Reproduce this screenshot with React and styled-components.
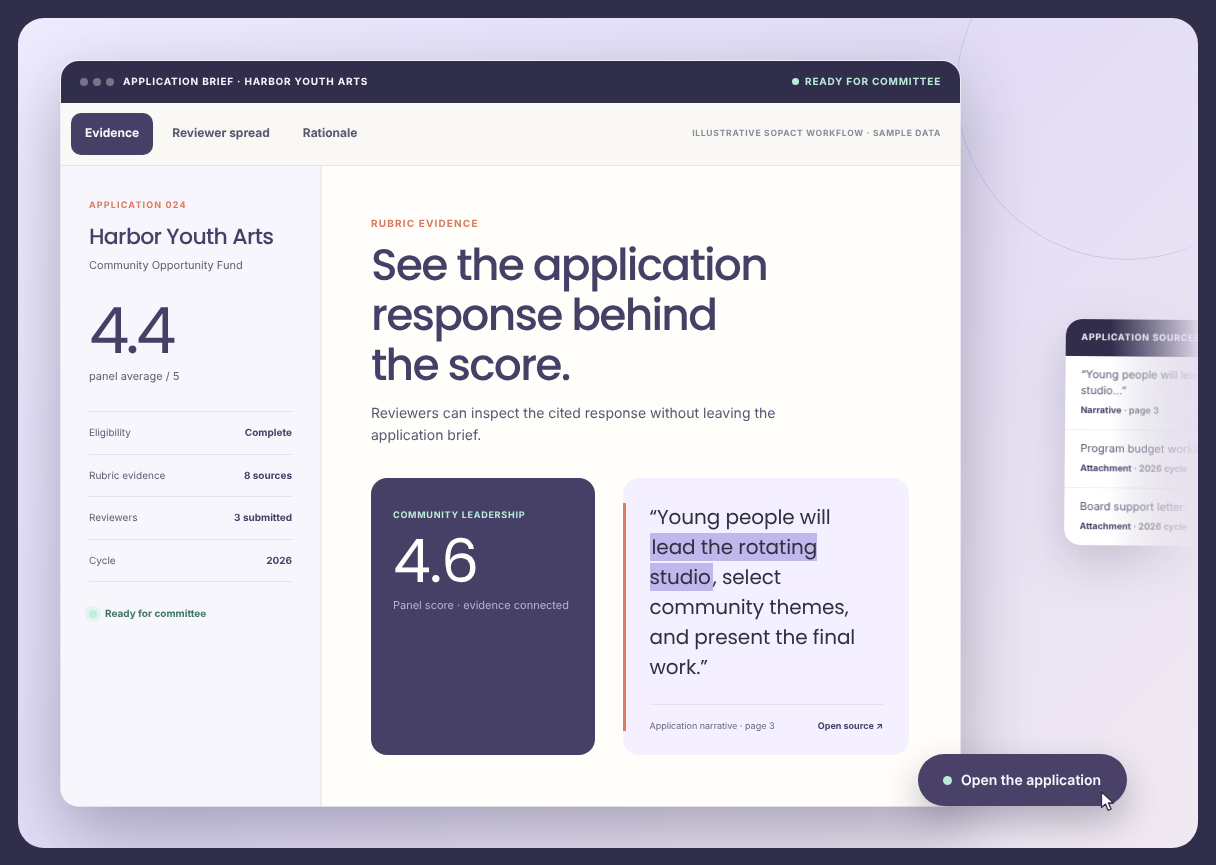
import React from "react";
import styled, { createGlobalStyle } from "styled-components";

const display = `"Poppins", "Inter", sans-serif`;

const Global = createGlobalStyle`
  html, body { margin: 0; padding: 0; background: #312e4c; }
  body {
    font-family: "Inter", "Liberation Sans", sans-serif;
    -webkit-font-smoothing: antialiased;
    text-rendering: geometricPrecision;
  }
  * { box-sizing: border-box; }
`;

const Page = styled.div`
  width: 1216px;
  height: 865px;
  padding: 18px 18px 17px;
  background: #312e4c;
`;

const Stage = styled.div`
  position: relative;
  height: 830px;
  padding: 43px 238px 42px 43px;
  border-radius: 26px;
  overflow: hidden;
  will-change: transform;
  background: linear-gradient(135deg, #efebff 0%, #e2dcf6 48%, #f1e9f1 100%);
`;

const Ring = styled.div`
  position: absolute;
  left: 938px;
  top: -100px;
  width: 342px;
  height: 342px;
  border-radius: 50%;
  border: 1px solid #c9c2ee;
  -webkit-mask-image: linear-gradient(90deg, #000 60%, transparent 75%);
  mask-image: linear-gradient(90deg, #000 60%, transparent 75%);
`;

const Window = styled.div`
  position: relative;
  height: 745px;
  border-radius: 18px;
  overflow: hidden;
  background: #fffefb;
  box-shadow: 0 0 0 1px rgba(255, 255, 255, 0.6), 0 26px 70px rgba(49, 46, 76, 0.36);
  display: flex;
  flex-direction: column;
`;

const TitleBar = styled.div`
  height: 42px;
  padding: 0 19px 1px;
  background: #312e4c;
  display: flex;
  align-items: center;
  justify-content: space-between;
`;

const TitleLeft = styled.div`
  display: flex;
  align-items: center;
  gap: 5px;
`;

const Light = styled.span`
  width: 8px;
  height: 8px;
  border-radius: 50%;
  background: #77748a;
`;

const WindowTitle = styled.span`
  margin-left: 4px;
  color: #f6f4fb;
  font-size: 10px;
  font-weight: 700;
  letter-spacing: 0.78px;
`;

const ReadyTag = styled.span`
  display: flex;
  align-items: center;
  gap: 6px;
  color: #b9ecd8;
  font-size: 10px;
  font-weight: 700;
  letter-spacing: 0.78px;
`;

const MintDot = styled.span`
  width: ${(p) => p.$size || 7}px;
  height: ${(p) => p.$size || 7}px;
  border-radius: 50%;
  background: #b9ecd8;
`;

const TabBar = styled.div`
  height: 63px;
  padding: 10px 19px 10px 10px;
  background: #f9f8f4;
  border-bottom: 1px solid #e6e4e6;
  display: flex;
  align-items: center;
  gap: 5px;
`;

const Tab = styled.div`
  height: 42px;
  padding: 0 14px 3px;
  border-radius: 10px;
  display: flex;
  align-items: center;
  font-size: 12px;
  font-weight: 700;
  color: ${(p) => (p.$active ? "#f8f6fd" : "#5a5670")};
  background: ${(p) => (p.$active ? "#463f66" : "transparent")};
`;

const TabNote = styled.span`
  margin-left: auto;
  color: #8c889c;
  font-size: 8.5px;
  font-weight: 700;
  letter-spacing: 0.75px;
`;

const Body = styled.div`
  flex: 1;
  display: flex;
  min-height: 0;
`;

const Side = styled.aside`
  width: 261px;
  padding: 34px 28px 0;
  background: #f8f6fd;
  border-right: 2px solid #eeecf2;
`;

const Eyebrow = styled.div`
  color: #d97a5c;
  font-size: ${(p) => p.$size || 9}px;
  font-weight: 700;
  letter-spacing: 1.15px;
`;

const AppName = styled.h2`
  margin: 9px 0 0;
  color: #463f66;
  font-family: ${display};
  font-size: 22px;
  line-height: 33px;
  font-weight: 500;
  letter-spacing: -0.66px;
`;

const Fund = styled.div`
  margin-top: 5px;
  color: #5f5b72;
  font-size: 11px;
`;

const BigScore = styled.div`
  margin-top: 21px;
  color: #463f66;
  font-family: ${display};
  font-size: 64px;
  line-height: 78px;
  font-weight: 400;
  letter-spacing: -3.4px;
`;

const ScoreNote = styled.div`
  color: #5f5b72;
  font-size: 11px;
  margin-top: -2px;
`;

const Facts = styled.div`
  margin-top: 28px;
  border-top: 1px solid #e5e3ea;
`;

const Fact = styled.div`
  height: 42.5px;
  padding-top: 0.5px;
  border-bottom: 1px solid #e5e3ea;
  display: flex;
  align-items: center;
  justify-content: space-between;
  color: #5f5b72;
  font-size: 10px;
`;

const FactValue = styled.b`
  color: #463f66;
  font-weight: 700;
`;

const Status = styled.div`
  margin-top: 26px;
  display: flex;
  align-items: center;
  gap: 8px;
  color: #3f7660;
  font-size: 10px;
  font-weight: 700;
`;

const Pulse = styled.span`
  width: 8px;
  height: 8px;
  border-radius: 50%;
  background: #c2ecdb;
  box-shadow: 0 0 0 4px #e2f4ee;
`;

const Main = styled.main`
  flex: 1;
  padding: 52px 50px 0 49px;
`;

const Headline = styled.h1`
  margin: 11px 0 0;
  color: #463f66;
  font-family: ${display};
  font-size: 44px;
  line-height: 50px;
  font-weight: 500;
  letter-spacing: -1.76px;
`;

const Lead = styled.p`
  margin: 12px 0 0;
  width: 440px;
  color: #5a5670;
  font-size: 14px;
  line-height: 22px;
`;

const Cards = styled.div`
  margin-top: 31px;
  display: flex;
  gap: 28px;
`;

const ScoreCard = styled.div`
  width: 224px;
  height: 277px;
  padding: 32px 22px;
  border-radius: 16px;
  background: #463f66;
`;

const ScoreLabel = styled.div`
  color: #b9ecd8;
  font-size: 9px;
  font-weight: 700;
  letter-spacing: 0.75px;
`;

const ScoreNum = styled.div`
  margin-top: 3px;
  color: #fffefb;
  font-family: ${display};
  font-size: 60px;
  line-height: 74px;
  font-weight: 400;
  letter-spacing: -1.2px;
`;

const ScoreSub = styled.div`
  color: #b9b5cc;
  font-size: 11px;
`;

const QuoteCard = styled.div`
  width: 286px;
  height: 277px;
  padding: 25px 25px 24px 0;
  border-radius: 16px;
  background: #f4f0ff;
`;

const QuoteInner = styled.div`
  height: 228px;
  padding-left: 23.5px;
  border-left: 3.5px solid #dc7d60;
  display: flex;
  flex-direction: column;
`;

const Quote = styled.div`
  max-width: 225px;
  margin-top: -1px;
  color: #312f3e;
  font-family: ${display};
  font-size: 20px;
  line-height: 30px;
  letter-spacing: -0.08px;
`;

const Mark = styled.mark`
  padding: 0 2px;
  color: inherit;
  background: #c0b8ec;
`;

const QuoteFoot = styled.div`
  margin-top: auto;
  padding: 18px 1px 0 0;
  border-top: 1px solid #e5e2ee;
  display: flex;
  justify-content: space-between;
  color: #6a6679;
  font-size: 9px;
  line-height: 8px;
`;

const SourceLink = styled.b`
  color: #463f66;
  font-size: 9px;
  font-weight: 700;
`;

const Sources = styled.div`
  position: absolute;
  left: 1047px;
  top: 302px;
  width: 250px;
  transform: rotate(0.5deg);
  filter: drop-shadow(0 18px 24px rgba(49, 46, 76, 0.22));
`;

const SourcesCard = styled.div`
  border-radius: 16px;
  overflow: hidden;
  background: #fff;
  -webkit-mask-image: linear-gradient(90deg, #000 18%, transparent 55%);
  mask-image: linear-gradient(90deg, #000 18%, transparent 55%);
`;

const SourcesHead = styled.div`
  height: 37px;
  padding: 0 15.5px;
  background: #312e4c;
  display: flex;
  align-items: center;
  color: #f8f6fd;
  font-size: 9px;
  font-weight: 700;
  letter-spacing: 0.7px;
`;

const Source = styled.div`
  padding: 11px 15.5px 11.5px;
  border-bottom: ${(p) => (p.$last ? "0" : "1px solid #f0eef3")};
`;

const SourceText = styled.div`
  color: #5a5670;
  font-size: 11px;
  line-height: 15.5px;
`;

const SourceMeta = styled.div`
  margin-top: 7px;
  color: #6a6679;
  font-size: 9px;
  line-height: 12px;
  font-weight: 600;

  b {
    color: #463f66;
    font-weight: 700;
  }
`;

const Cta = styled.div`
  position: absolute;
  left: 900px;
  top: 736px;
  width: 209px;
  height: 52px;
  padding-left: 25px;
  border-radius: 26px;
  background: #4a4168;
  display: flex;
  align-items: center;
  gap: 9px;
  color: #f8f6fd;
  font-size: 14px;
  font-weight: 600;
  box-shadow: 0 16px 36px rgba(49, 46, 76, 0.32);
`;

const Pointer = styled.svg`
  position: absolute;
  left: 1082px;
  top: 773px;
`;

const rows = [
  ["Eligibility", "Complete"],
  ["Rubric evidence", "8 sources"],
  ["Reviewers", "3 submitted"],
  ["Cycle", "2026"],
];

export default function App() {
  return (
    <Page>
      <Global />
      <Stage>
        <Ring />
        <Window>
          <TitleBar>
            <TitleLeft>
              <Light />
              <Light />
              <Light />
              <WindowTitle>APPLICATION BRIEF · HARBOR YOUTH ARTS</WindowTitle>
            </TitleLeft>
            <ReadyTag>
              <MintDot />
              READY FOR COMMITTEE
            </ReadyTag>
          </TitleBar>
          <TabBar>
            <Tab $active>Evidence</Tab>
            <Tab>Reviewer spread</Tab>
            <Tab>Rationale</Tab>
            <TabNote>ILLUSTRATIVE SOPACT WORKFLOW · SAMPLE DATA</TabNote>
          </TabBar>
          <Body>
            <Side>
              <Eyebrow>APPLICATION 024</Eyebrow>
              <AppName>Harbor Youth Arts</AppName>
              <Fund>Community Opportunity Fund</Fund>
              <BigScore>4.4</BigScore>
              <ScoreNote>panel average / 5</ScoreNote>
              <Facts>
                {rows.map(([k, v]) => (
                  <Fact key={k}>
                    <span>{k}</span>
                    <FactValue>{v}</FactValue>
                  </Fact>
                ))}
              </Facts>
              <Status>
                <Pulse />
                Ready for committee
              </Status>
            </Side>
            <Main>
              <Eyebrow $size={10}>RUBRIC EVIDENCE</Eyebrow>
              <Headline>
                See the application
                <br />
                response behind
                <br />
                the score.
              </Headline>
              <Lead>Reviewers can inspect the cited response without leaving the application brief.</Lead>
              <Cards>
                <ScoreCard>
                  <ScoreLabel>COMMUNITY LEADERSHIP</ScoreLabel>
                  <ScoreNum>4.6</ScoreNum>
                  <ScoreSub>Panel score · evidence connected</ScoreSub>
                </ScoreCard>
                <QuoteCard>
                  <QuoteInner>
                    <Quote>
                      “Young people will <Mark>lead the rotating studio</Mark>, select community themes, and present the
                      final work.”
                    </Quote>
                    <QuoteFoot>
                      <span>Application narrative · page 3</span>
                      <SourceLink>Open source ↗</SourceLink>
                    </QuoteFoot>
                  </QuoteInner>
                </QuoteCard>
              </Cards>
            </Main>
          </Body>
        </Window>
        <Sources>
          <SourcesCard>
            <SourcesHead>APPLICATION SOURCES</SourcesHead>
            <Source>
              <SourceText>“Young people will lead the rotating studio...”</SourceText>
              <SourceMeta>
                <b>Narrative</b> · page 3
              </SourceMeta>
            </Source>
            <Source>
              <SourceText>Program budget worksheet</SourceText>
              <SourceMeta>
                <b>Attachment</b> · 2026 cycle
              </SourceMeta>
            </Source>
            <Source $last>
              <SourceText>Board support letter.</SourceText>
              <SourceMeta>
                <b>Attachment</b> · 2026 cycle
              </SourceMeta>
            </Source>
          </SourcesCard>
        </Sources>
        <Cta>
          <MintDot $size={9} />
          Open the application
        </Cta>
        <Pointer width="16" height="22" viewBox="0 0 16 22">
          <path d="M1.5 1v15.5l4-3.4 2.6 6.2 3-1.3-2.7-6h5.2z" fill="#fff" stroke="#312e4c" strokeWidth="1.3" strokeLinejoin="round" />
        </Pointer>
      </Stage>
    </Page>
  );
}
